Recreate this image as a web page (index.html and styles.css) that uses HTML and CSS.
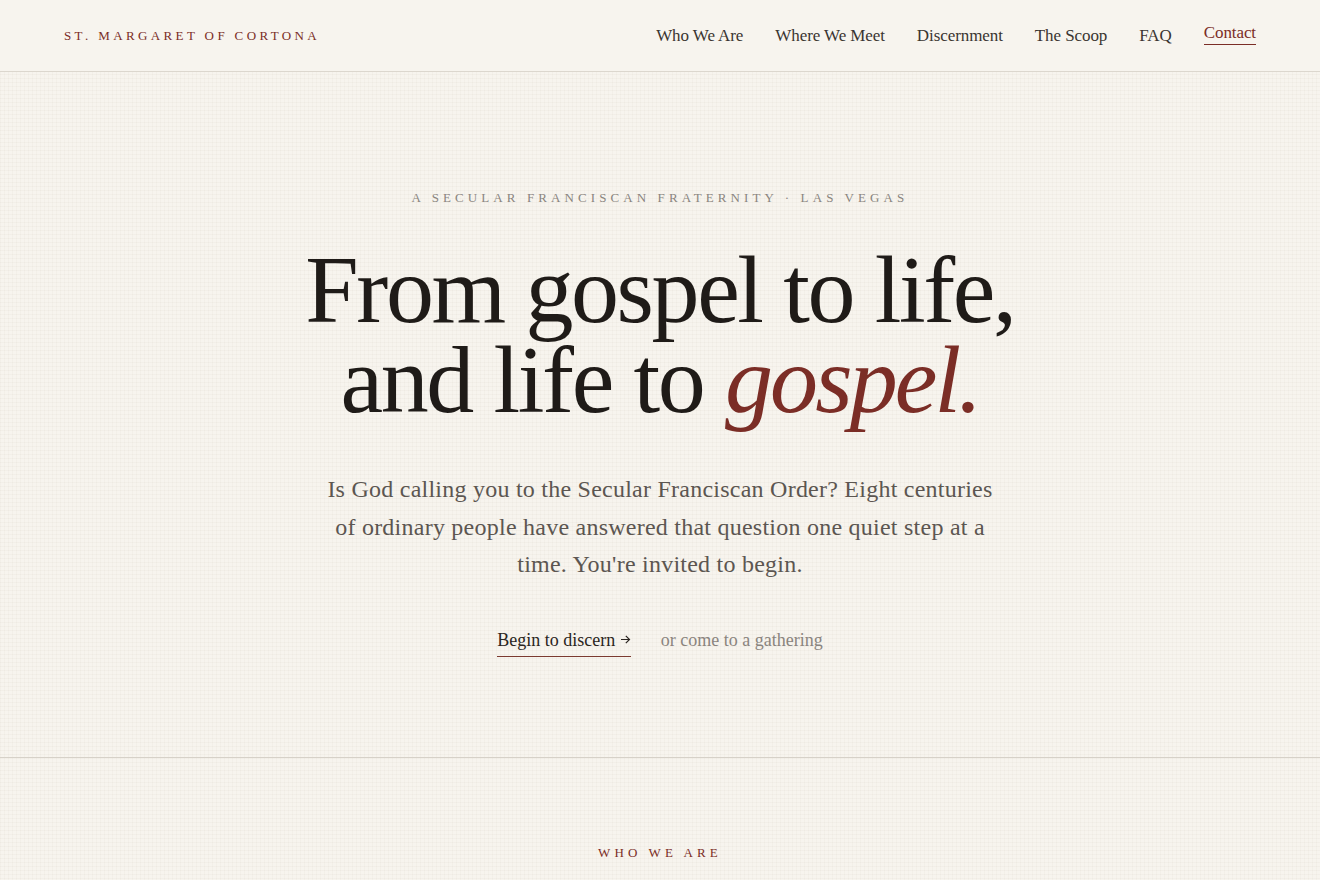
FILE: index.html
```html
<!DOCTYPE html>
<html lang="en">
<head>
  <meta charset="UTF-8" />
  <title>St. Margaret of Cortona – Secular Franciscan Fraternity</title>
  <meta name="viewport" content="width=device-width, initial-scale=1" />
  <link rel="stylesheet" href="styles.css">
</head>
<body>
  <header class="site-header">
    <a class="brand" href="#">St. Margaret of Cortona</a>
    <nav class="main-nav">
      <a href="#who">Who We Are</a>
      <a href="#where">Where We Meet</a>
      <a href="#discern">Discernment</a>
      <a href="#scoop">The Scoop</a>
      <a href="#faq">FAQ</a>
      <a href="#contact" class="current">Contact</a>
    </nav>
  </header>

  <section class="hero">
    <p class="eyebrow">A Secular Franciscan Fraternity · Las Vegas</p>
    <h1 class="headline">From gospel to life,<br>and life to <em>gospel.</em></h1>
    <p class="lead">Is God calling you to the Secular Franciscan Order? Eight centuries of ordinary people have answered that question one quiet step at a time. You're invited to begin.</p>
    <div class="actions">
      <a class="primary" href="#discern">Begin to discern
        <svg width="11" height="11" viewBox="0 0 11 11" aria-hidden="true"><path d="M1 5.5h8.5M5.8 1.8l3.7 3.7-3.7 3.7" fill="none" stroke="currentColor" stroke-width="1.2"/></svg>
      </a>
      <a class="secondary" href="#where">or come to a gathering</a>
    </div>
  </section>

  <section class="intro" id="who">
    <p class="eyebrow accent">Who We Are</p>
  </section>
</body>
</html>
```

FILE: styles.css
```css
body {
  font-family: 'Liberation Serif', 'Times New Roman', serif;
  margin: 0;
  color: #2a2521;
  background-color: #f7f4ee;
  background-image:
    repeating-linear-gradient(0deg, rgba(120,100,70,0.035) 0 1px, transparent 1px 4px),
    repeating-linear-gradient(90deg, rgba(120,100,70,0.03) 0 1px, transparent 1px 4px);
}
a {
  text-decoration: none;
  color: inherit;
}
.site-header {
  display: flex;
  justify-content: space-between;
  align-items: center;
  height: 71px;
  padding: 0 64px;
  background: #f7f4ee;
  border-bottom: 1px solid #dcd7ce;
}
.brand {
  font-size: 13px;
  letter-spacing: 0.26em;
  text-transform: uppercase;
  color: #7b2d26;
  margin-top: 1px;
}
.main-nav {
  display: flex;
  align-items: center;
  gap: 32px;
}
.main-nav a {
  font-size: 17px;
  color: #3a3531;
  letter-spacing: -0.005em;
}
.main-nav a.current {
  color: #7b2d26;
  padding-bottom: 1px;
  border-bottom: 1px solid #7b2d26;
  margin-top: -3px;
}
.hero {
  text-align: center;
  padding: 116px 0 100px;
  border-bottom: 1px solid #d6d1c8;
}
.eyebrow {
  margin: 0;
  font-size: 13px;
  line-height: 20px;
  letter-spacing: 0.315em;
  text-transform: uppercase;
  color: #8a857f;
}
.eyebrow.accent {
  color: #7b2d26;
}
.headline {
  margin: 37px 0 0;
  font-weight: normal;
  font-size: 96px;
  line-height: 90px;
  letter-spacing: -0.025em;
  color: #1f1b18;
}
.headline em {
  color: #7b2d26;
  letter-spacing: -0.03em;
}
.lead {
  max-width: 680px;
  margin: 46px auto 0;
  font-size: 24px;
  line-height: 37.5px;
  letter-spacing: 0.01em;
  color: #5c5651;
}
.actions {
  display: flex;
  justify-content: center;
  align-items: flex-start;
  gap: 30px;
  margin-top: 44px;
  font-size: 18px;
  line-height: 25px;
}
.actions .primary {
  color: #2a2521;
  padding-bottom: 3px;
  border-bottom: 1px solid #7b3a30;
}
.actions .primary svg {
  vertical-align: 1px;
}
.actions .secondary {
  color: #8a847e;
}
.intro {
  text-align: center;
  padding: 85px 0 120px;
}
```
